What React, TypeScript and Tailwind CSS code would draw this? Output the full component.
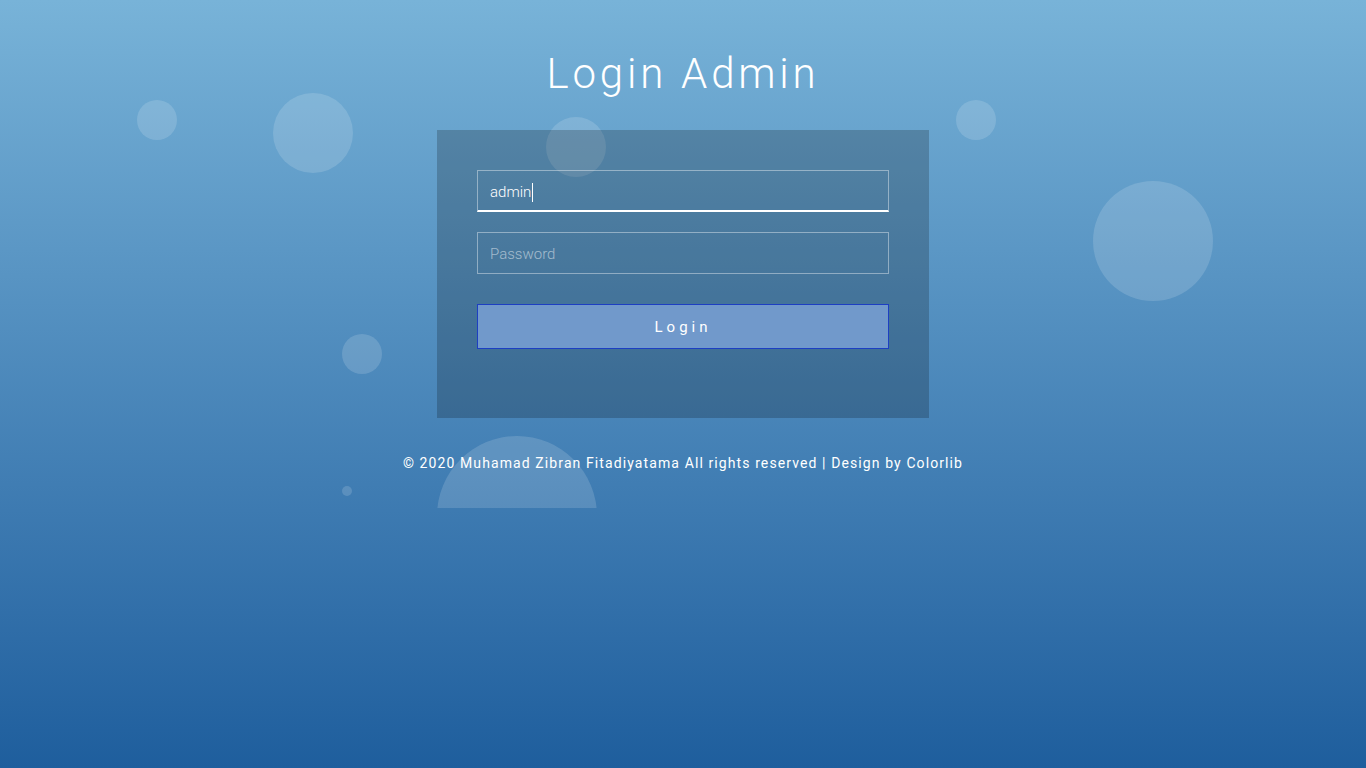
const bubbles = [
	"left-[137px] top-[100px] w-[40px] h-[40px]",
	"left-[273px] top-[93px] w-[80px] h-[80px]",
	"left-[546px] top-[117px] w-[60px] h-[60px]",
	"left-[956px] top-[100px] w-[40px] h-[40px]",
	"left-[1093px] top-[181px] w-[120px] h-[120px]",
	"left-[342px] top-[334px] w-[40px] h-[40px]",
	"left-[342px] top-[486px] w-[10px] h-[10px]",
	"left-[437px] top-[436px] w-[160px] h-[160px]",
];

export default function App() {
	return (
		<div
			className="relative min-h-screen w-full overflow-hidden bg-gradient-to-b from-[#78b3d8] to-[#1e5e9d] text-white"
			style={{ fontFamily: "Roboto, 'Liberation Sans', sans-serif" }}
		>
			<div className="absolute left-0 top-0 h-[508px] w-full overflow-hidden">
				{bubbles.map((b, i) => (
					<div key={i} className={`absolute rounded-full bg-white/15 ${b}`} />
				))}
			</div>

			<div className="relative z-10 flex flex-col items-center">
				<h1 className="pt-[49px] text-[42px] leading-[50px] font-light tracking-[3.8px]">
					Login Admin
				</h1>

				<form className="mt-[31px] flex w-[492px] flex-col bg-black/20 px-10 pt-10 pb-[69px]">
					<div className="flex h-[42px] items-center border border-white/40 border-b-2 border-b-white px-3 pt-[3px] text-[15px] font-light">
						<span>admin</span>
						<span className="ml-px h-[19px] w-px bg-white" />
					</div>
					<div className="mt-5 flex h-[42px] items-center border border-white/40 px-3 pt-[2px] text-[15px] font-light text-white/50">
						Password
					</div>
					<button
						type="button"
						className="mt-[30px] h-[45px] border border-[#1d3fc2] bg-[#7199cb] pt-px text-[15px] tracking-[4px] text-white"
					>
						Login
					</button>
				</form>

				<p className="mt-[35px] text-[14px] leading-5 tracking-[1.1px]">
					© 2020 Muhamad Zibran Fitadiyatama All rights reserved | Design by Colorlib
				</p>
			</div>
		</div>
	);
}
